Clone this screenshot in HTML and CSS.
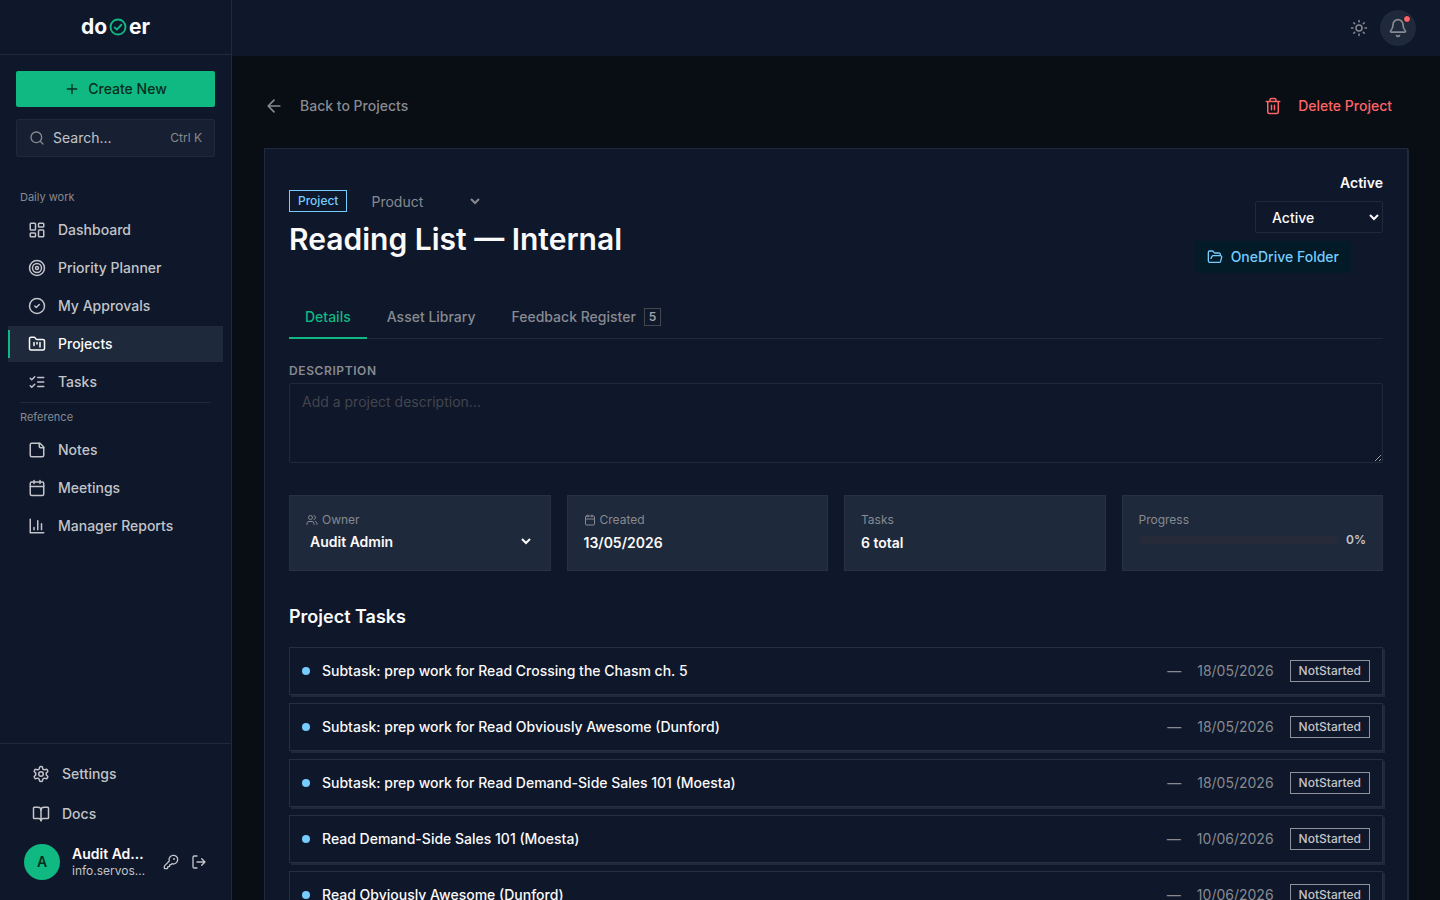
FILE: index.html
```html
<!DOCTYPE html>
<html lang="en">
<head>
<meta charset="utf-8">
<meta name="viewport" content="width=device-width, initial-scale=1">
<title>Reading List — Internal</title>
<link rel="stylesheet" href="styles.css">
</head>
<body>
<div class="app">
  <aside class="sidebar">
    <div class="brand">
      <span>do</span>
      <svg class="brand-mark" viewBox="0 0 24 24"><circle cx="12" cy="12" r="10"/><path d="m7.500 12.500 3 3 6-6.500"/></svg>
      <span>er</span>
    </div>
    <div class="quick">
      <button class="create" type="button"><svg class="icon i16" viewBox="0 0 24 24"><path d="M5 12h14M12 5v14"/></svg>Create New</button>
      <button class="search" type="button"><svg class="icon i16" viewBox="0 0 24 24"><circle cx="11" cy="11" r="8"/><path d="m21 21-4.300-4.300"/></svg><span>Search...</span><kbd>Ctrl K</kbd></button>
    </div>
    <nav class="nav">
      <h2 class="nav-label">Daily work</h2>
      <a href="#" class="nav-item"><svg class="icon i18" viewBox="0 0 24 24"><rect width="7" height="9" x="3" y="3" rx="1"/><rect width="7" height="5" x="14" y="3" rx="1"/><rect width="7" height="9" x="14" y="12" rx="1"/><rect width="7" height="5" x="3" y="16" rx="1"/></svg>Dashboard</a>
      <a href="#" class="nav-item"><svg class="icon i18" viewBox="0 0 24 24"><circle cx="12" cy="12" r="10"/><circle cx="12" cy="12" r="6"/><circle cx="12" cy="12" r="2"/></svg>Priority Planner</a>
      <a href="#" class="nav-item"><svg class="icon i18" viewBox="0 0 24 24"><circle cx="12" cy="12" r="10"/><path d="m9 12 2 2 4-4"/></svg>My Approvals</a>
      <a href="#" class="nav-item active" aria-current="page"><svg class="icon i18" viewBox="0 0 24 24"><path d="M4 20h16a2 2 0 0 0 2-2V8a2 2 0 0 0-2-2h-7.930a2 2 0 0 1-1.660-.900l-.820-1.200A2 2 0 0 0 7.930 3H4a2 2 0 0 0-2 2v13c0 1.100.900 2 2 2Z"/><path d="M8 10v4M12 10v2M16 10v6"/></svg>Projects</a>
      <a href="#" class="nav-item"><svg class="icon i18" viewBox="0 0 24 24"><path d="m3 17 2 2 4-4M3 7l2 2 4-4M13 6h8M13 12h8M13 18h8"/></svg>Tasks</a>
      <h2 class="nav-label divided">Reference</h2>
      <a href="#" class="nav-item"><svg class="icon i18" viewBox="0 0 24 24"><path d="M16 3H5a2 2 0 0 0-2 2v14a2 2 0 0 0 2 2h14a2 2 0 0 0 2-2V8Z"/><path d="M15 3v4a2 2 0 0 0 2 2h4"/></svg>Notes</a>
      <a href="#" class="nav-item"><svg class="icon i18" viewBox="0 0 24 24"><path d="M8 2v4M16 2v4M3 10h18"/><rect width="18" height="18" x="3" y="4" rx="2"/></svg>Meetings</a>
      <a href="#" class="nav-item"><svg class="icon i18" viewBox="0 0 24 24"><path d="M3 3v18h18M18 17V9M13 17V5M8 17v-3"/></svg>Manager Reports</a>
    </nav>
    <div class="foot">
      <a href="#" class="foot-item"><svg class="icon i18" viewBox="0 0 24 24"><path d="M12.220 2h-.440a2 2 0 0 0-2 2v.180a2 2 0 0 1-1 1.730l-.430.250a2 2 0 0 1-2 0l-.150-.080a2 2 0 0 0-2.730.730l-.220.380a2 2 0 0 0 .730 2.730l.150.100a2 2 0 0 1 1 1.720v.510a2 2 0 0 1-1 1.740l-.150.090a2 2 0 0 0-.730 2.730l.220.380a2 2 0 0 0 2.730.730l.150-.080a2 2 0 0 1 2 0l.430.250a2 2 0 0 1 1 1.730V20a2 2 0 0 0 2 2h.440a2 2 0 0 0 2-2v-.180a2 2 0 0 1 1-1.730l.430-.250a2 2 0 0 1 2 0l.150.080a2 2 0 0 0 2.730-.730l.220-.390a2 2 0 0 0-.730-2.730l-.150-.080a2 2 0 0 1-1-1.740v-.500a2 2 0 0 1 1-1.740l.150-.090a2 2 0 0 0 .730-2.730l-.220-.380a2 2 0 0 0-2.730-.730l-.150.080a2 2 0 0 1-2 0l-.430-.250a2 2 0 0 1-1-1.730V4a2 2 0 0 0-2-2z"/><circle cx="12" cy="12" r="3"/></svg>Settings</a>
      <a href="#" class="foot-item"><svg class="icon i18" viewBox="0 0 24 24"><path d="M12 7v14"/><path d="M3 18a1 1 0 0 1-1-1V4a1 1 0 0 1 1-1h5a4 4 0 0 1 4 4 4 4 0 0 1 4-4h5a1 1 0 0 1 1 1v13a1 1 0 0 1-1 1h-6a3 3 0 0 0-3 3 3 3 0 0 0-3-3z"/></svg>Docs</a>
      <div class="user">
        <span class="avatar">A</span>
        <div class="who"><strong>Audit Admin</strong><span>info.servosys@example.com</span></div>
        <button class="mini" type="button" aria-label="Change password"><svg class="icon i16" viewBox="0 0 24 24"><path d="M2.586 17.414A2 2 0 0 0 2 18.828V21a1 1 0 0 0 1 1h3a1 1 0 0 0 1-1v-1a1 1 0 0 1 1-1h1a1 1 0 0 0 1-1v-1a1 1 0 0 1 1-1h.172a2 2 0 0 0 1.414-.586l.814-.814a6.500 6.500 0 1 0-4-4z"/><circle cx="16.500" cy="7.500" r=".500" fill="currentColor"/></svg></button>
        <button class="mini" type="button" aria-label="Log out"><svg class="icon i16" viewBox="0 0 24 24"><path d="M9 21H5a2 2 0 0 1-2-2V5a2 2 0 0 1 2-2h4M16 17l5-5-5-5M21 12H9"/></svg></button>
      </div>
    </div>
  </aside>

  <div class="page">
    <header class="topbar">
      <button class="theme" type="button" aria-label="Theme"><svg class="icon i18" viewBox="0 0 24 24"><circle cx="12" cy="12" r="4"/><path d="M12 2v2M12 20v2M4.930 4.930l1.410 1.410M17.660 17.660l1.410 1.410M2 12h2M20 12h2M6.340 17.660l-1.410 1.410M19.070 4.930l-1.410 1.410"/></svg></button>
      <button class="bell" type="button" aria-label="Notifications"><svg class="icon i20" viewBox="0 0 24 24"><path d="M10.268 21a2 2 0 0 0 3.464 0"/><path d="M3.262 15.326A1 1 0 0 0 4 17h16a1 1 0 0 0 .740-1.673C19.410 13.956 18 12.499 18 8A6 6 0 0 0 6 8c0 4.499-1.411 5.956-2.738 7.326"/></svg><span class="dot"></span></button>
    </header>
    <main class="main">
      <div class="actions">
        <a href="#" class="back"><svg class="icon i20" viewBox="0 0 24 24"><path d="m12 19-7-7 7-7M19 12H5"/></svg>Back to Projects</a>
        <button class="delete" type="button"><svg class="icon i18" viewBox="0 0 24 24"><path d="M3 6h18M19 6v14a2 2 0 0 1-2 2H7a2 2 0 0 1-2-2V6M8 6V4a2 2 0 0 1 2-2h4a2 2 0 0 1 2 2v2M10 11v6M14 11v6"/></svg>Delete Project</button>
      </div>

      <section class="card">
        <div class="head">
          <div class="head-main">
            <div class="kind"><span class="tag">Project</span><select class="type" aria-label="Project type"><option>Product</option></select></div>
            <h1>Reading List — Internal</h1>
          </div>
          <div class="head-side">
            <span class="status-text">Active</span>
            <select class="status" aria-label="Status"><option>Active</option></select>
            <a href="#" class="drive"><svg class="icon i16" viewBox="0 0 24 24"><path d="m6 14 1.500-2.900A2 2 0 0 1 9.240 10H20a2 2 0 0 1 1.940 2.500l-1.540 6a2 2 0 0 1-1.950 1.500H4a2 2 0 0 1-2-2V5a2 2 0 0 1 2-2h3.900a2 2 0 0 1 1.690.900l.810 1.200a2 2 0 0 0 1.670.900H18a2 2 0 0 1 2 2v2"/></svg>OneDrive Folder</a>
          </div>
        </div>

        <div class="tabs" role="tablist">
          <button class="tab on" type="button" role="tab" aria-selected="true">Details</button>
          <button class="tab" type="button" role="tab">Asset Library</button>
          <button class="tab" type="button" role="tab">Feedback Register<span class="count">5</span></button>
        </div>

        <label class="label" for="description">Description</label>
        <textarea class="description" id="description" placeholder="Add a project description..."></textarea>

        <div class="stats">
          <div class="stat">
            <label class="stat-name" for="owner"><svg class="icon i12" viewBox="0 0 24 24"><path d="M16 21v-2a4 4 0 0 0-4-4H6a4 4 0 0 0-4 4v2M22 21v-2a4 4 0 0 0-3-3.870M16 3.130a4 4 0 0 1 0 7.750"/><circle cx="9" cy="7" r="4"/></svg>Owner</label>
            <select class="owner" id="owner"><option>Audit Admin</option></select>
          </div>
          <div class="stat">
            <span class="stat-name"><svg class="icon i12" viewBox="0 0 24 24"><path d="M8 2v4M16 2v4M3 10h18"/><rect width="18" height="18" x="3" y="4" rx="2"/></svg>Created</span>
            <span class="stat-value">13/05/2026</span>
          </div>
          <div class="stat"><span class="stat-name">Tasks</span><span class="stat-value">6 total</span></div>
          <div class="stat"><span class="stat-name">Progress</span><div class="progress"><span class="track"></span><span>0%</span></div></div>
        </div>

        <h2 class="section">Project Tasks</h2>
        <ul class="tasks">
          <li class="task"><span class="bullet"></span><span class="name">Subtask: prep work for Read Crossing the Chasm ch. 5</span><span class="meta">—</span><time class="meta">18/05/2026</time><span class="state">NotStarted</span></li>
          <li class="task"><span class="bullet"></span><span class="name">Subtask: prep work for Read Obviously Awesome (Dunford)</span><span class="meta">—</span><time class="meta">18/05/2026</time><span class="state">NotStarted</span></li>
          <li class="task"><span class="bullet"></span><span class="name">Subtask: prep work for Read Demand-Side Sales 101 (Moesta)</span><span class="meta">—</span><time class="meta">18/05/2026</time><span class="state">NotStarted</span></li>
          <li class="task"><span class="bullet"></span><span class="name">Read Demand-Side Sales 101 (Moesta)</span><span class="meta">—</span><time class="meta">10/06/2026</time><span class="state">NotStarted</span></li>
          <li class="task"><span class="bullet"></span><span class="name">Read Obviously Awesome (Dunford)</span><span class="meta">—</span><time class="meta">10/06/2026</time><span class="state">NotStarted</span></li>
        </ul>
      </section>
    </main>
  </div>
</div>
</body>
</html>
```
FILE: styles.css
```css
:root {
  color-scheme: dark;
  --bg: #090d14;
  --surface: #0f172a;
  --raised: #1e293b;
  --line: #1e293b;
  --text: #fafafa;
  --soft: #c2c4c9;
  --muted: #878a91;
  --green: #10b981;
  --blue: #75ccff;
  --red: #ff6467;
}

* { box-sizing: border-box; }

body {
  margin: 0;
  background: var(--bg);
  color: var(--text);
  font: 14px/20px Inter, "Liberation Sans", sans-serif;
}

button, select, textarea, kbd { font: inherit; color: inherit; }
button { margin: 0; padding: 0; border: 0; background: none; cursor: pointer; }
a { color: inherit; text-decoration: none; }
h1, h2, ul { margin: 0; padding: 0; }

.icon { flex: none; fill: none; stroke: currentColor; stroke-width: 2; stroke-linecap: round; stroke-linejoin: round; }
.i12 { width: 12px; height: 12px; }
.i16 { width: 16px; height: 16px; }
.i18 { width: 18px; height: 18px; }
.i20 { width: 20px; height: 20px; }

.app { display: flex; height: 100vh; overflow: hidden; }

/* Sidebar */
.sidebar { display: flex; flex-direction: column; flex: none; width: 232px; background: var(--surface); border-right: 1px solid var(--line); }
.brand { display: flex; align-items: center; justify-content: center; gap: 2px; height: 55px; border-bottom: 1px solid var(--line); font-size: 21px; font-weight: 700; line-height: 28px; }
.brand-mark { width: 18px; height: 18px; fill: none; stroke: var(--green); stroke-width: 2.5; stroke-linecap: round; stroke-linejoin: round; }
.quick { display: flex; flex-direction: column; gap: 12px; padding: 16px; }
.create { display: flex; align-items: center; justify-content: center; gap: 8px; height: 36px; border-radius: 2px; background: var(--green); color: #052e20; font-weight: 500; }
.search { display: flex; align-items: center; gap: 8px; height: 38px; padding: 0 12px; border: 1px solid var(--line); border-radius: 2px; background: #162032; color: var(--soft); }
.search .icon { color: var(--muted); }
.search kbd { margin-left: auto; color: var(--muted); font-size: 12px; }

.nav { display: flex; flex: 1; flex-direction: column; gap: 2px; padding: 16px 8px; }
.nav-label { padding: 0 12px 5px; color: var(--muted); font-size: 11px; font-weight: 400; line-height: 16px; }
.nav-label.divided { margin: 0 12px; padding: 6px 0 5px; border-top: 1px solid var(--line); }
.nav-item { display: flex; align-items: center; gap: 12px; height: 36px; padding: 0 20px; color: var(--soft); font-weight: 500; }
.nav-item.active { position: relative; background: var(--raised); color: var(--text); }
.nav-item.active::before { content: ""; position: absolute; left: 0; top: 4px; bottom: 4px; width: 2px; background: var(--green); }

.foot { display: flex; flex-direction: column; gap: 4px; padding: 12px; border-top: 1px solid var(--line); }
.foot-item { display: flex; align-items: center; gap: 12px; height: 36px; padding: 0 20px; color: var(--soft); font-weight: 500; }
.user { display: flex; align-items: center; gap: 12px; height: 52px; padding: 0 12px; }
.avatar { display: flex; align-items: center; justify-content: center; flex: none; width: 36px; height: 36px; border-radius: 50%; background: var(--green); color: #052e20; font-weight: 600; }
.who { display: flex; flex: 1; flex-direction: column; min-width: 0; }
.who > * { overflow: hidden; text-overflow: ellipsis; white-space: nowrap; }
.who strong { font-weight: 600; line-height: 18px; }
.who span { color: var(--soft); font-size: 12px; line-height: 16px; }
.mini { display: flex; color: var(--soft); }

/* Page */
.page { display: flex; flex: 1; flex-direction: column; min-width: 0; }
.topbar { display: flex; align-items: center; justify-content: flex-end; gap: 12px; flex: none; height: 56px; padding: 0 24px; background: var(--surface); color: var(--muted); }
.theme { display: flex; }
.bell { position: relative; display: flex; align-items: center; justify-content: center; width: 36px; height: 36px; border-radius: 50%; background: var(--raised); }
.dot { position: absolute; top: 5px; right: 5px; width: 8px; height: 8px; border: 1px solid var(--surface); border-radius: 50%; background: var(--red); }
.main { flex: 1; min-height: 0; padding: 32px; overflow: hidden; }

.actions { display: flex; justify-content: space-between; height: 36px; margin-bottom: 24px; }
.back, .delete { display: flex; align-items: center; gap: 16px; font-weight: 500; }
.back { color: var(--muted); }
.delete { padding-right: 16px; color: var(--red); }

.card { padding: 24px; border: 1px solid var(--line); background: var(--surface); box-shadow: 1px 1px 0 var(--raised); }
.head { display: flex; justify-content: space-between; margin-bottom: 22px; }
.head-main { display: flex; flex-direction: column; gap: 4px; padding-top: 12px; }
.kind { display: flex; align-items: center; gap: 12px; height: 32px; }
.tag { padding: 0 8px; border: 1px solid var(--blue); color: var(--blue); font-size: 12px; font-weight: 500; line-height: 20px; }
h1 { font-size: 30px; font-weight: 600; line-height: 36px; }
.type { width: 124px; height: 32px; padding: 0 8px; border: 0; background: transparent; color: var(--muted); }
.head-side { display: flex; flex-direction: column; align-items: flex-end; gap: 8px; }
.status-text { font-weight: 600; }
.status { width: 128px; height: 32px; padding: 0 12px; border: 1px solid var(--line); border-radius: 2px; background: var(--surface); font-weight: 500; }
.drive { display: flex; align-items: center; gap: 8px; height: 32px; margin-right: 32px; padding: 0 12px; background: #031a27; color: var(--blue); font-weight: 500; }

.tabs { display: flex; gap: 4px; height: 44px; border-bottom: 1px solid var(--line); margin-bottom: 22px; }
.tab { display: flex; align-items: center; gap: 8px; height: 44px; padding: 2px 16px 0; border-bottom: 2px solid transparent; color: var(--muted); font-weight: 500; }
.tab.on { border-color: var(--green); color: var(--green); }
.count { padding: 0 4px; border: 1px solid #45474f; color: #a0a2a8; font-size: 12px; font-weight: 600; line-height: 16px; }

.label { display: block; margin-bottom: 2px; color: var(--muted); font-size: 12px; font-weight: 600; letter-spacing: 0.05em; text-transform: uppercase; }
.description { display: block; width: 100%; height: 80px; padding: 8px 12px; border: 1px solid var(--line); border-radius: 2px; background: var(--surface); resize: vertical; }
.description::placeholder { color: #42454d; }

.stats { display: grid; grid-template-columns: repeat(4, 1fr); gap: 16px; margin: 32px 0; }
.stat { display: flex; flex-direction: column; height: 76px; padding: 16px; border: 1px solid #263244; background: var(--raised); }
.stat-name { display: flex; align-items: center; gap: 4px; color: var(--muted); font-size: 12px; line-height: 16px; }
.stat-value { margin-top: 5px; font-weight: 600; }
.owner { width: 100%; height: 28px; padding: 0; border: 0; background: transparent; font-weight: 600; }
.progress { display: flex; align-items: center; gap: 8px; margin-top: 4px; color: var(--soft); font-size: 12px; font-weight: 600; line-height: 16px; }
.track { flex: 1; height: 8px; border-radius: 4px; background: #272b39; }

.section { margin-bottom: 16px; font-size: 18px; font-weight: 600; line-height: 28px; }
.tasks { display: flex; flex-direction: column; gap: 8px; list-style: none; }
.task { display: flex; align-items: center; gap: 16px; height: 48px; padding: 0 12px; border: 1px solid #242f40; background: var(--surface); box-shadow: 2px 2px 0 var(--raised); }
.bullet { flex: none; width: 8px; height: 8px; margin-right: -4px; border-radius: 50%; background: var(--blue); }
.name { flex: 1; font-weight: 500; }
.meta { color: var(--muted); }
.state { padding: 0 8px; border: 1px solid #8f9299; color: var(--soft); font-size: 12px; font-weight: 500; line-height: 20px; }
```
